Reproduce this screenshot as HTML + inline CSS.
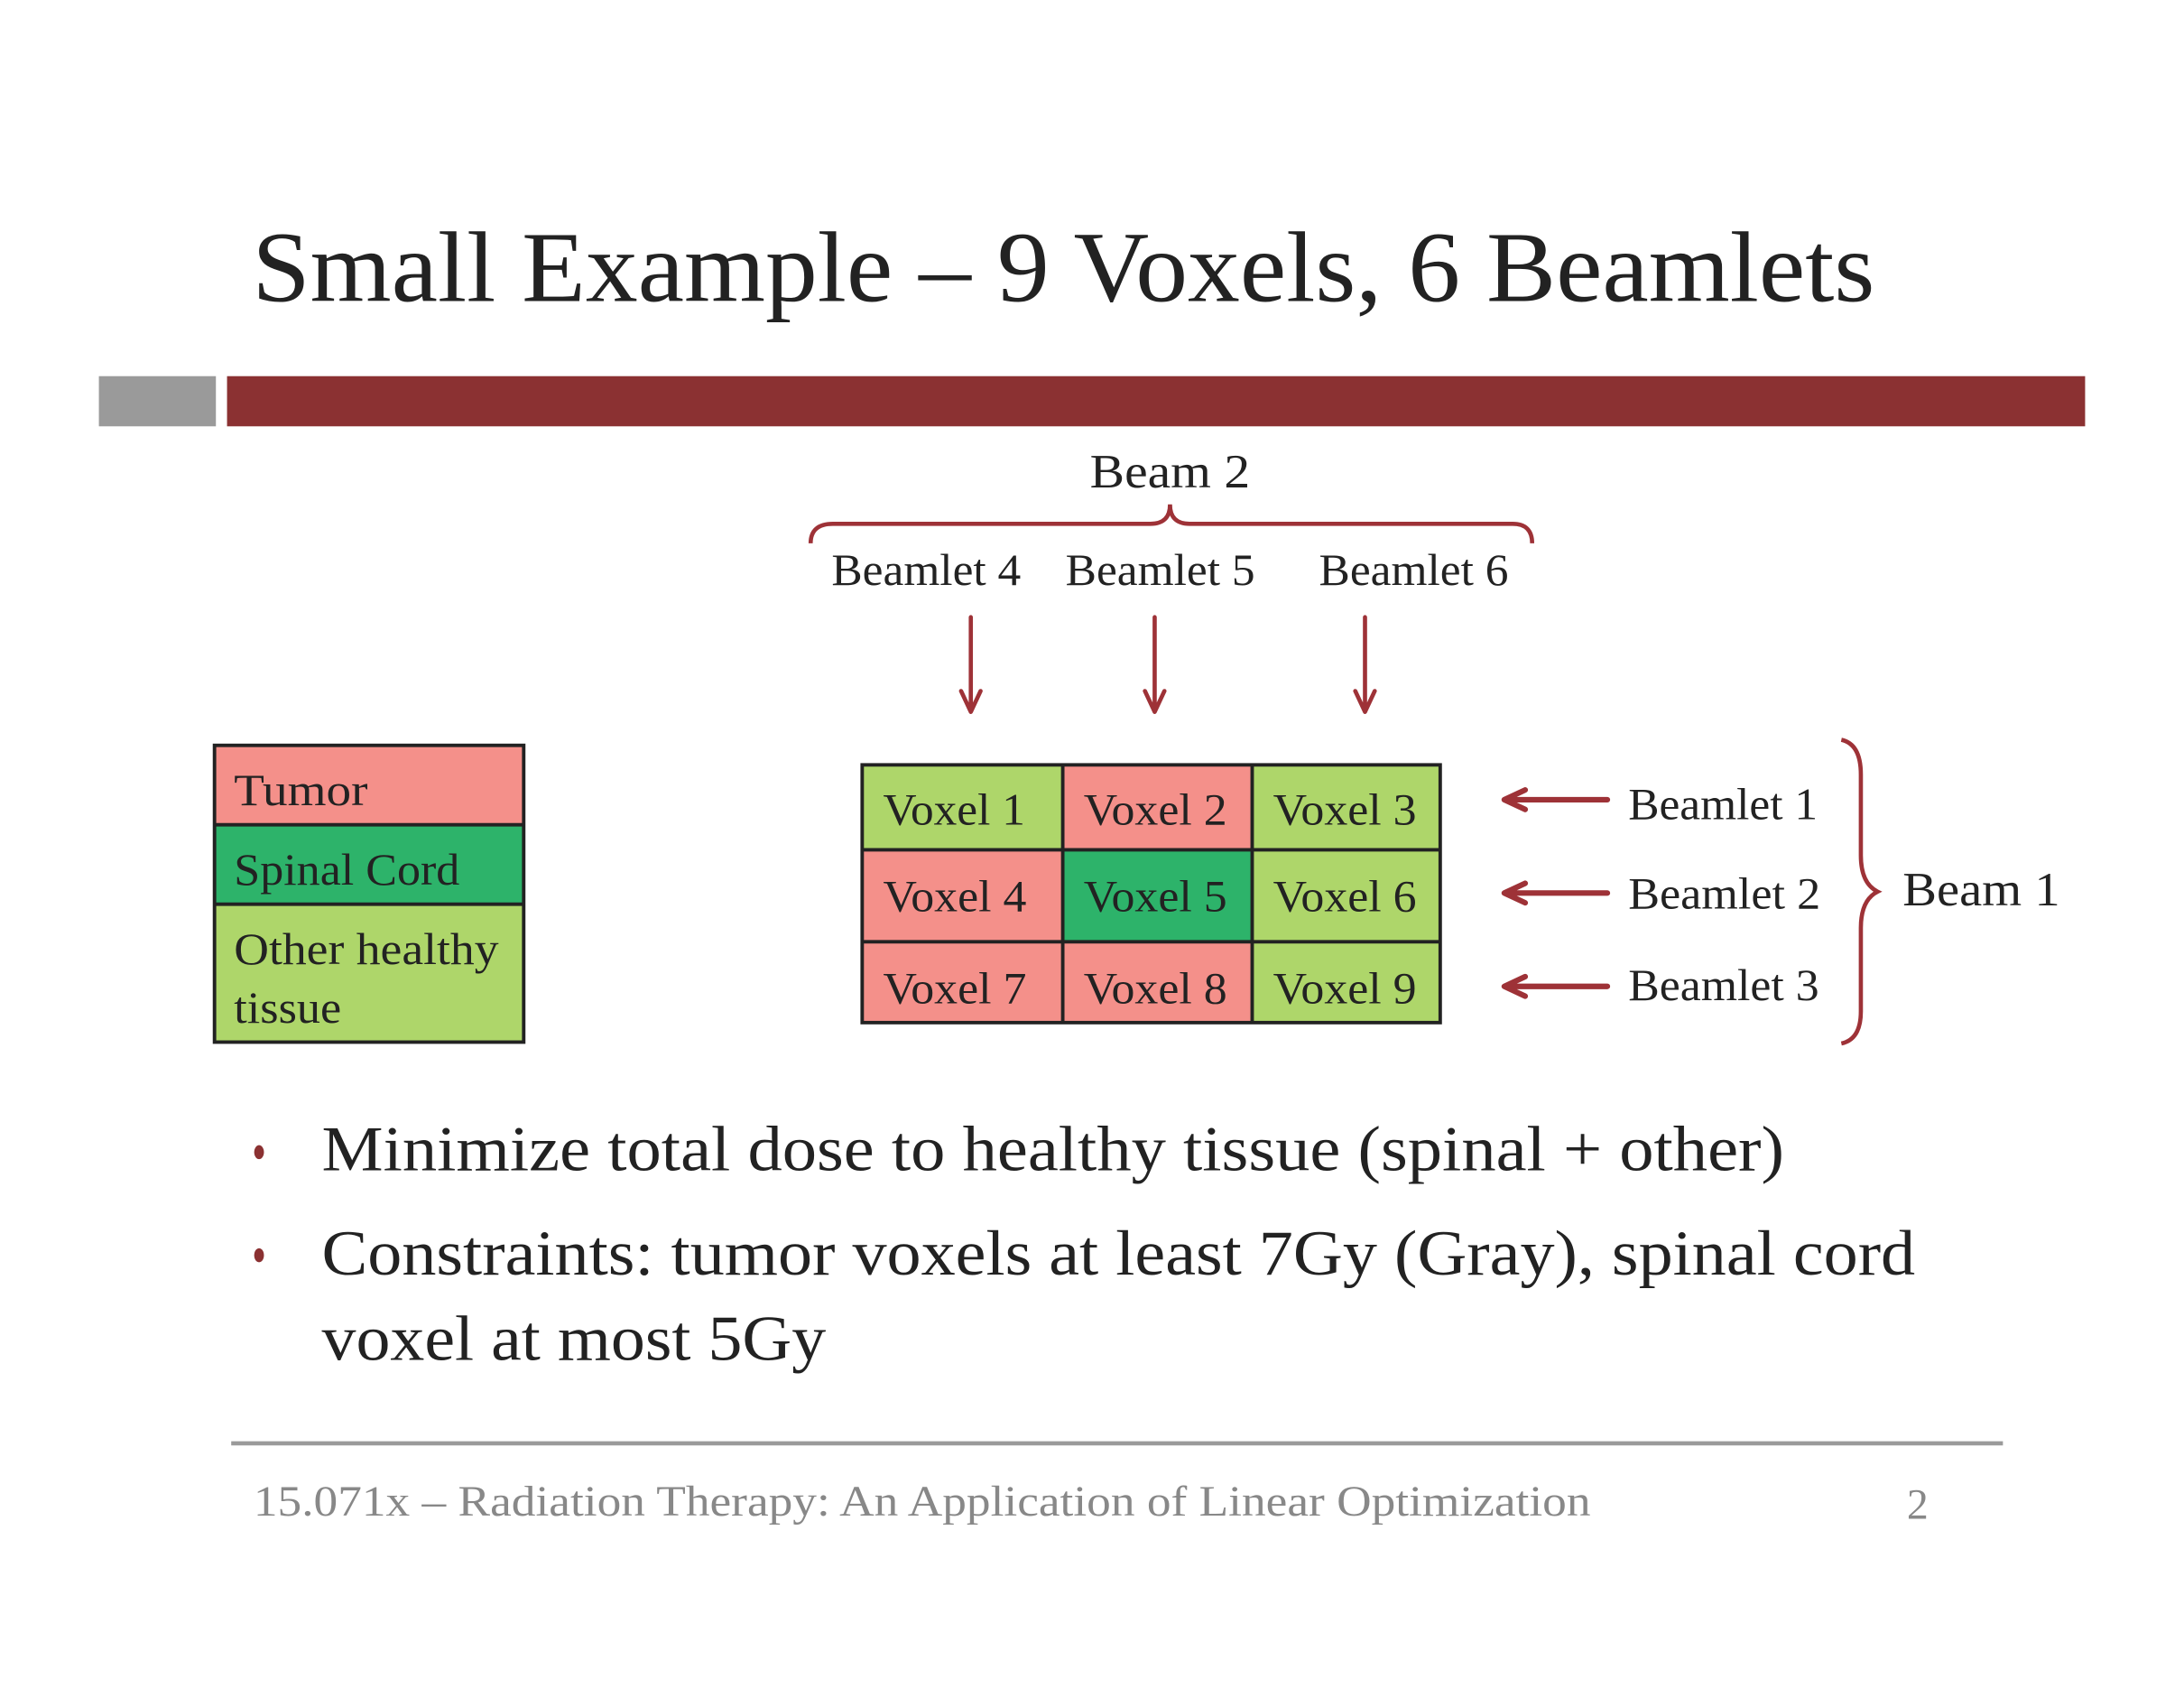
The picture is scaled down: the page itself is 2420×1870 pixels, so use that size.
<!DOCTYPE html>
<html><head><meta charset="utf-8"><style>
html,body{margin:0;padding:0;background:#fff;}
svg{display:block;}
text{font-family:"Liberation Serif",serif;fill:#222;}
</style></head><body>
<svg width="2420" height="1870" viewBox="0 0 1568 1211.6" preserveAspectRatio="none" xmlns="http://www.w3.org/2000/svg">
<rect width="1568" height="1212" fill="#fff"/>
<text x="181" y="216" font-size="72" textLength="1165" lengthAdjust="spacingAndGlyphs">Small Example – 9 Voxels, 6 Beamlets</text>
<rect x="71" y="270" width="84" height="36" fill="#9a9a9a"/>
<rect x="163" y="270" width="1334" height="36" fill="#8B3132"/>

<text x="840" y="350" font-size="34" text-anchor="middle" textLength="115" lengthAdjust="spacingAndGlyphs">Beam 2</text>
<path d="M582,390 Q582,376 598,376 L826,376 Q840,376 840,362 Q840,376 854,376 L1086,376 Q1100,376 1100,390" fill="none" stroke="#9E3237" stroke-width="3"/>
<g font-size="32">
<text x="597" y="420" textLength="136" lengthAdjust="spacingAndGlyphs">Beamlet 4</text>
<text x="765" y="420" textLength="136" lengthAdjust="spacingAndGlyphs">Beamlet 5</text>
<text x="947" y="420" textLength="136" lengthAdjust="spacingAndGlyphs">Beamlet 6</text>
</g>
<g stroke="#9E3237" stroke-width="3" fill="none" stroke-linecap="round" stroke-linejoin="round">
<path d="M697,443 V510 M690,496 L697,511 L704,496"/>
<path d="M829,443 V510 M822,496 L829,511 L836,496"/>
<path d="M980,443 V510 M973,496 L980,511 L987,496"/>
</g>
<g stroke="#9E3237" stroke-width="4" fill="none" stroke-linecap="round" stroke-linejoin="round">
<path d="M1154,574 H1082 M1095,567 L1080,574 L1095,581"/>
<path d="M1154,641 H1082 M1095,634 L1080,641 L1095,648"/>
<path d="M1154,708 H1082 M1095,701 L1080,708 L1095,715"/>
</g>
<path d="M1322,531 Q1336,534 1336,556 L1336,614 Q1336,634 1348,640 Q1336,646 1336,666 L1336,726 Q1336,746 1322,749" stroke="#9E3237" stroke-width="3" fill="none"/>
<g font-size="32">
<text x="1169" y="588" textLength="136" lengthAdjust="spacingAndGlyphs">Beamlet 1</text>
<text x="1169" y="652" textLength="138" lengthAdjust="spacingAndGlyphs">Beamlet 2</text>
<text x="1169" y="718" textLength="137" lengthAdjust="spacingAndGlyphs">Beamlet 3</text>
</g>
<text x="1366" y="650" font-size="34" textLength="113" lengthAdjust="spacingAndGlyphs">Beam 1</text>

<rect x="154" y="535" width="222" height="57" fill="#F4908A"/>
<rect x="154" y="592" width="222" height="57" fill="#2DB36A"/>
<rect x="154" y="649" width="222" height="99" fill="#AED66A"/>
<g stroke="#222" stroke-width="2.5" fill="none">
<rect x="154" y="535" width="222" height="213"/>
<path d="M154,592 H376 M154,649 H376"/>
</g>
<g font-size="32">
<text x="168" y="578" textLength="96" lengthAdjust="spacingAndGlyphs">Tumor</text>
<text x="168" y="635" textLength="162" lengthAdjust="spacingAndGlyphs">Spinal Cord</text>
<text x="168" y="692" textLength="190" lengthAdjust="spacingAndGlyphs">Other healthy</text>
<text x="168" y="734" textLength="77" lengthAdjust="spacingAndGlyphs">tissue</text>
</g>

<rect x="619" y="549" width="144" height="61" fill="#AED66A"/>
<rect x="763" y="549" width="136" height="61" fill="#F4908A"/>
<rect x="899" y="549" width="135" height="61" fill="#AED66A"/>
<rect x="619" y="610" width="144" height="66" fill="#F4908A"/>
<rect x="763" y="610" width="136" height="66" fill="#2DB36A"/>
<rect x="899" y="610" width="135" height="66" fill="#AED66A"/>
<rect x="619" y="676" width="144" height="58" fill="#F4908A"/>
<rect x="763" y="676" width="136" height="58" fill="#F4908A"/>
<rect x="899" y="676" width="135" height="58" fill="#AED66A"/>
<g stroke="#222" stroke-width="2.5" fill="none">
<rect x="619" y="549" width="415" height="185"/>
<path d="M619,610 H1034 M619,676 H1034 M763,549 V734 M899,549 V734"/>
</g>
<g font-size="32">
<text x="634" y="592" textLength="102" lengthAdjust="spacingAndGlyphs">Voxel 1</text>
<text x="778" y="592" textLength="103" lengthAdjust="spacingAndGlyphs">Voxel 2</text>
<text x="914" y="592" textLength="103" lengthAdjust="spacingAndGlyphs">Voxel 3</text>
<text x="634" y="654" textLength="103" lengthAdjust="spacingAndGlyphs">Voxel 4</text>
<text x="778" y="654" textLength="103" lengthAdjust="spacingAndGlyphs">Voxel 5</text>
<text x="914" y="654" textLength="103" lengthAdjust="spacingAndGlyphs">Voxel 6</text>
<text x="634" y="720" textLength="103" lengthAdjust="spacingAndGlyphs">Voxel 7</text>
<text x="778" y="720" textLength="103" lengthAdjust="spacingAndGlyphs">Voxel 8</text>
<text x="914" y="720" textLength="103" lengthAdjust="spacingAndGlyphs">Voxel 9</text>
</g>

<ellipse cx="186" cy="827" rx="3.5" ry="5" fill="#8B3132"/>
<ellipse cx="186" cy="901" rx="3.5" ry="5" fill="#8B3132"/>
<g font-size="46">
<text x="231" y="840" textLength="1050" lengthAdjust="spacingAndGlyphs">Minimize total dose to healthy tissue (spinal + other)</text>
<text x="231" y="915" textLength="1144" lengthAdjust="spacingAndGlyphs">Constraints: tumor voxels at least 7Gy (Gray), spinal cord</text>
<text x="231" y="976" textLength="362" lengthAdjust="spacingAndGlyphs">voxel at most 5Gy</text>
</g>

<rect x="166" y="1034.5" width="1272" height="3" fill="#9a9a9a"/>
<text x="182" y="1088" font-size="31" style="fill:#888" textLength="960" lengthAdjust="spacingAndGlyphs">15.071x – Radiation Therapy: An Application of Linear Optimization</text>
<text x="1369" y="1090" font-size="31" style="fill:#888">2</text>
</svg>
</body></html>
